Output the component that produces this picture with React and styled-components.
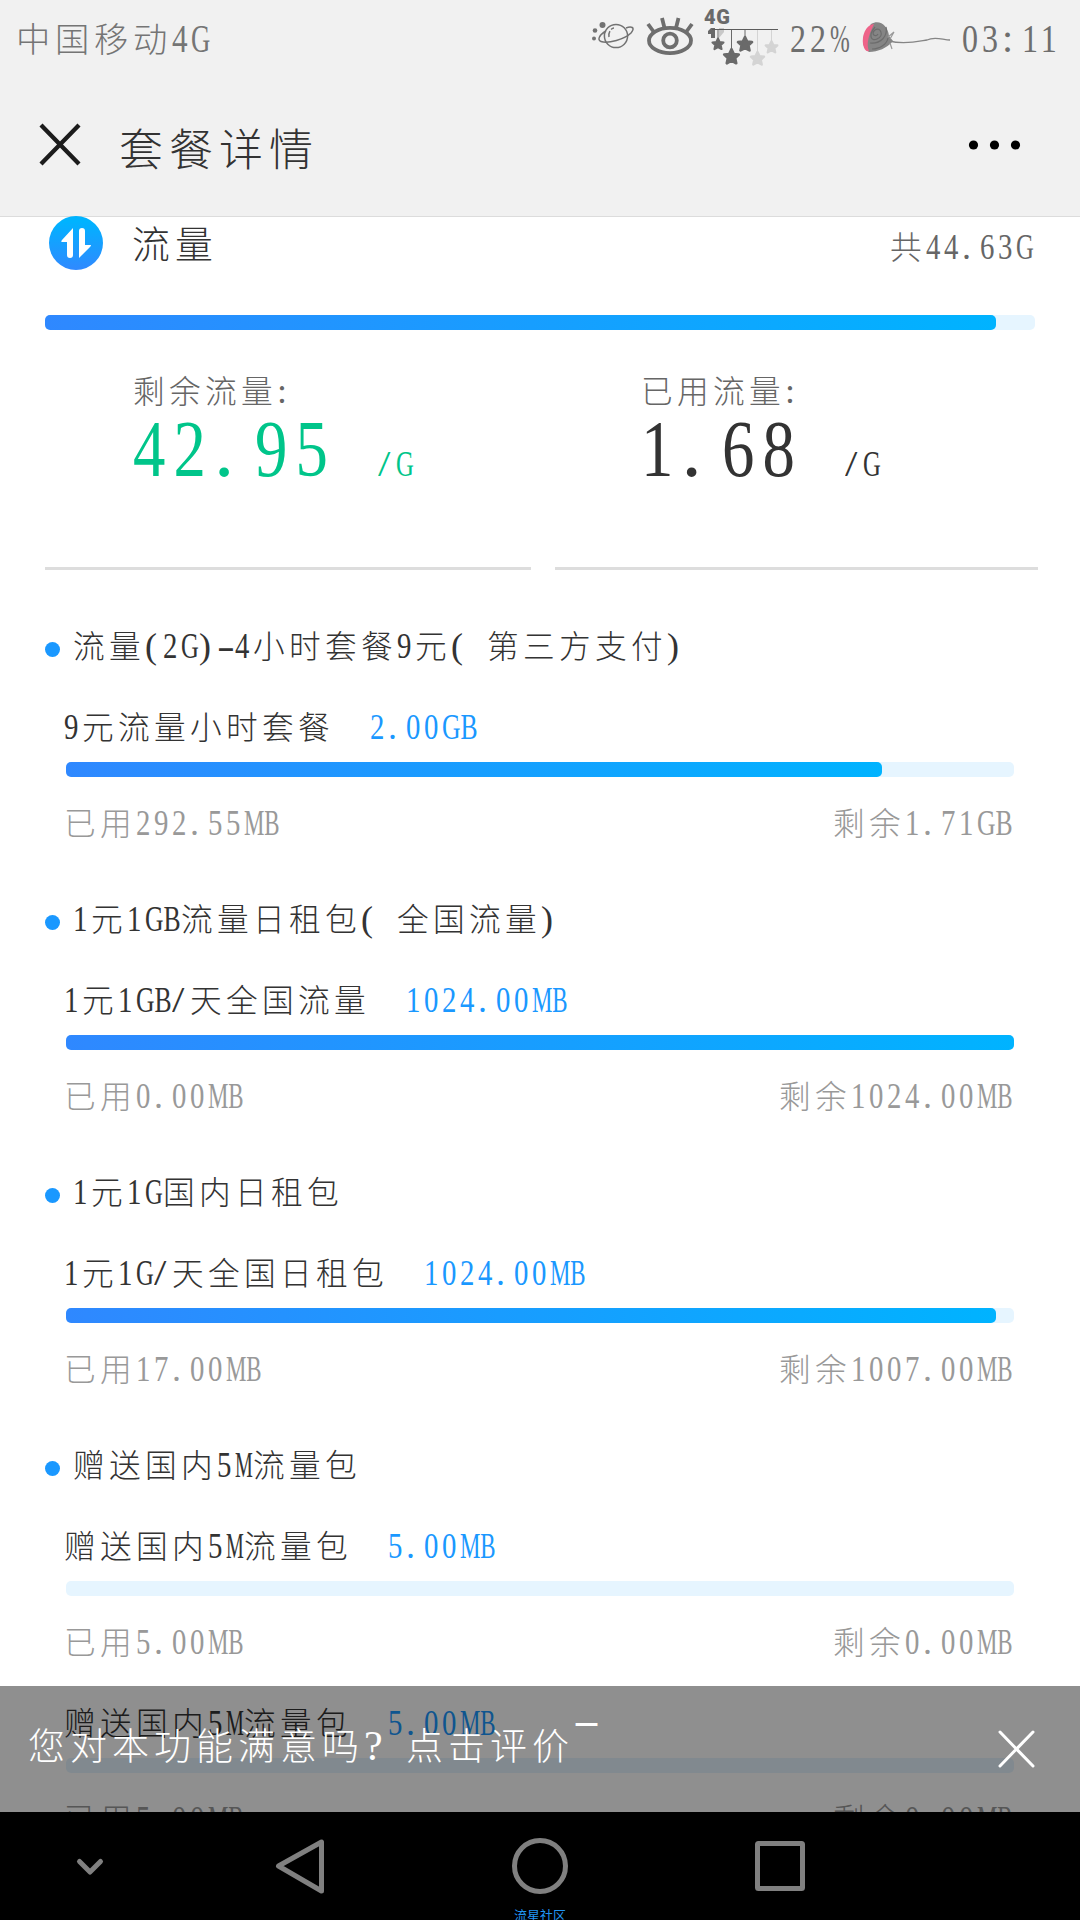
import React from 'react';
import styled, { createGlobalStyle } from 'styled-components';

const GlobalStyle = createGlobalStyle`
    * {
        box-sizing: border-box;
    }

    body {
        margin: 0;
        background: #fff;
        font-family: "Liberation Serif", "Noto Sans CJK SC", serif;
    }
`;

const Screen = styled.div`
    display: flex;
    flex-direction: column;
    width: 1080px;
    height: 1920px;
    overflow: hidden;
    color: #333;
`;

/* ---------- text ---------- */

const Line = styled.div`
    font-size: ${({ $size = 36 }) => $size}px;
    line-height: ${({ $height = 40 }) => $height}px;
    color: ${({ $color = '#333' }) => $color};
    white-space: pre;
`;

const Han = styled.span`
    font-size: 0.88em;
    line-height: 0;
    letter-spacing: 0.1364em;
    font-weight: 300;
`;

// every latin character takes half of a han cell
const HalfCell = styled.span`
    display: inline-block;
    width: ${({ $count }) => $count * 0.5}em;
`;

const Squeezed = styled.span`
    display: inline-block;
    transform: scaleX(${({ $scale }) => $scale});
    transform-origin: left center;
`;

// slim digits, spaced so that each one still fills its half cell
const Digits = styled(Squeezed)`
    letter-spacing: 0.125em;
`;

const WIDTHS = { G: 0.722, B: 0.667, M: 0.889, '%': 0.833, '-': 0.333, '/': 0.4 };

const Mixed = ({ text }) => {
    const runs = text.match(/[\u4e00-\u9fff]+|[0-9]+|[GBM]+|./g);

    return runs.map((run, i) => {
        if (/[\u4e00-\u9fff]/.test(run)) {
            return <Han key={i}>{run}</Han>;
        }
        if (/[0-9]/.test(run)) {
            return (
                <HalfCell key={i} $count={run.length}>
                    <Digits $scale={0.8}>{run}</Digits>
                </HalfCell>
            );
        }
        const natural = [...run].reduce((sum, c) => sum + (WIDTHS[c] || 0), 0);
        return (
            <HalfCell key={i} $count={run.length}>
                {natural ? (
                    <Squeezed $scale={(run.length * 0.495) / natural}>{run}</Squeezed>
                ) : run}
            </HalfCell>
        );
    });
};

/* ---------- header ---------- */

const Header = styled.header`
    flex: none;
    height: 216px;
    background: #f1f1f1;
    box-shadow: 0 1px 0 #dcdcdc;
`;

const StatusBar = styled.div`
    display: flex;
    align-items: center;
    height: 78px;
    padding: 0 18px 0 16px;
`;

const StatusIcons = styled.div`
    display: flex;
    align-items: center;
    margin-left: auto;
`;

const StatusText = styled(Line)`
    width: ${({ $width }) => $width}px;
`;

const TitleBar = styled.div`
    display: flex;
    align-items: center;
    height: 134px;
    padding: 0 58px 0 38px;
`;

const PageTitle = styled(Line)`
    flex: 1;
    margin: 7px 0 0 35px;
`;

const PlanetIcon = () => (
    <svg width="50" height="78" viewBox="590 0 50 78" fill="none" stroke="#727272" strokeWidth="1.5">
        <circle cx="616" cy="36" r="11.6" />
        <path d="M606 31C599 35 597 40 601 41.5C608 44 625 39 631 33C636 27 631 26 626 28" />
        <path d="M609 37C608 33 611 28 614 28" strokeDasharray="6 2" />
        <g fill="#727272" stroke="none">
            <circle cx="602.5" cy="25" r="3" />
            <circle cx="595" cy="30.5" r="2.3" />
            <circle cx="594" cy="38.5" r="2" />
        </g>
    </svg>
);

const EyeIcon = () => (
    <svg width="60" height="78" viewBox="640 0 60 78" fill="none" stroke="#6e6e6e" strokeWidth="3.8">
        <ellipse cx="670" cy="40.5" rx="21" ry="12.7" />
        <circle cx="670" cy="40.5" r="6.8" />
        <path d="M648 24L653.5 31.5M662 18L664.5 28M678.5 18L676 28M692 24L686.5 31.5" />
    </svg>
);

const STAR = 'M0-6.5L2-2.2L6.5-1.8L3.2 1.3L4.2 6L0 3.7L-4.2 6L-3.2 1.3L-6.5-1.8L-2-2.2Z';

const HANGING_STARS = [
    { x: 718, y: 44, scale: 0.85, color: '#6a6a6a' },
    { x: 731.5, y: 56.5, scale: 1.12, color: '#6a6a6a' },
    { x: 745, y: 44, scale: 1.08, color: '#6a6a6a' },
    { x: 757.5, y: 58.5, scale: 1, color: '#d4d4d4' },
    { x: 771.5, y: 47, scale: 0.9, color: '#d4d4d4' },
];

const SignalLabel = styled.text`
    font: 900 20px Roboto, sans-serif;
    fill: #6a6a6a;
`;

const SignalIcon = () => (
    <svg width="90" height="78" viewBox="700 0 90 78">
        <SignalLabel x="704" y="23.5" textLength="26">4G</SignalLabel>
        <path d="M715 28V38H711V34H708V31L711 28Z" fill="#6a6a6a" />
        <path d="M719 28H724V32L719 38Z" fill="#c8c8c8" />
        {HANGING_STARS.map(({ x, y, scale, color }) => (
            <g key={x} stroke={color} fill={color}>
                <path d={`M${x} 29V${y - 4}`} />
                <path d={STAR} transform={`translate(${x} ${y}) scale(${scale})`} strokeWidth="2.4" strokeLinejoin="round" />
            </g>
        ))}
        <path d="M712 29.5H778" stroke="#5c5c5c" strokeWidth="1.2" />
    </svg>
);

const RoseIcon = () => (
    <svg width="112" height="78" viewBox="850 0 112 78" fill="none">
        <path d="M889 41C905 45 920 41 927 40C935 36 943 40 950 40" stroke="#858585" strokeWidth="1.3" />
        <path d="M871 24C880 19 888 26 889 36L893 41C887 48 878 52 869 52C863 48 862 42 864 35Z" fill="#858585" />
        <path d="M874 24C865 25 862 36 863 44C864 49 866 52 869 51C866 44 869 37 870 33Z" fill="#ee6389" />
        <path d="M875 27C868 35 871 42 877 39C885 36 880 26 875 30C870 34 876 38 878 34M886 27C888 36 881 44 870 43M872 49C880 49 887 44 888 38" stroke="#6c6c6c" strokeWidth="1.2" />
        <path d="M888 37L894 32L890 39M890 43L892 49" stroke="#999" strokeWidth="1.2" />
    </svg>
);

const CloseIcon = () => (
    <svg width="46" height="46" viewBox="0 0 46 46" stroke="#1c1c1c" strokeWidth="4.3">
        <path d="M3 3L41 42M41 3L3 42" />
    </svg>
);

const MoreIcon = () => (
    <svg width="54" height="10" viewBox="0 0 54 10">
        <circle cx="5.5" cy="5" r="4.6" />
        <circle cx="26.5" cy="5" r="4.6" />
        <circle cx="47.5" cy="5" r="4.6" />
    </svg>
);

/* ---------- content ---------- */

const Content = styled.main`
    position: relative;
    flex: none;
    height: 1596px;
    overflow: hidden;
`;

const Summary = styled.section`
    padding: 0 45px;
`;

const SummaryHead = styled.div`
    display: flex;
    align-items: center;
    height: 54px;
    padding-left: 4px;
`;

const SummaryTitle = styled(Line)`
    flex: 1;
    margin: 2px 0 0 29px;
`;

const SummaryTotal = styled(Line)`
    margin: 8px 1px 0 0;
`;

const Track = styled.div`
    height: 15px;
    border-radius: 5px;
    background: #e6f5ff;
`;

const Fill = styled.div`
    height: 100%;
    border-radius: 5px;
    background: linear-gradient(to right, #2f88ff, #00b3ff);
`;

const Bar = ({ percent }) => (
    <Track>
        <Fill style={{ width: `${percent}%` }} />
    </Track>
);

const SummaryBar = styled.div`
    margin: 45px 0 41px;
`;

const Totals = styled.div`
    display: grid;
    grid-template-columns: 486px 483px;
    column-gap: 24px;
    width: 993px;
`;

const Total = styled.div`
    height: 199px;
    padding-left: ${({ $indent }) => $indent}px;
    border-bottom: 3px solid #ddd;
`;

const Amount = styled.div`
    display: flex;
    align-items: baseline;
    gap: 42px;
    margin-top: -2px;
`;

const PackageList = styled.section`
    display: flex;
    flex-direction: column;
    gap: 56px;
    padding-top: 56px;
`;

const PackageItem = styled.article`
    padding: 0 66px 0 64px;
    margin-top: ${({ $untitled }) => ($untitled ? -15 : 0)}px;
`;

const PackageTitle = styled.div`
    display: flex;
    align-items: center;
    gap: 13px;
    margin: 0 0 41px -19px;
`;

const Dot = styled.i`
    width: 15px;
    height: 15px;
    margin-top: 7px;
    border-radius: 50%;
    background: #1a98ff;
`;

const PackageName = styled.div`
    display: flex;
    gap: 36px;
`;

const PackageBar = styled.div`
    margin: 15px 0 26px 2px;
`;

const Usage = styled.div`
    display: flex;
    justify-content: space-between;
    margin-right: 1px;
`;

const TransferIcon = () => (
    <svg width="54" height="54" viewBox="0 0 54 54">
        <defs>
            <linearGradient id="transfer" x1="0" y1="0" x2="0" y2="1">
                <stop offset="0.1" stopColor="#00b3ff" />
                <stop offset="1" stopColor="#3089ff" />
            </linearGradient>
        </defs>
        <circle cx="27" cy="27" r="27" fill="url(#transfer)" />
        <path
            d="M24 12V39Q24 42 21 42Q18 42 18 39V26H12.5Q12 25 13 24ZM30 15Q30 12 33 12Q36 12 36 15V29H42Q42 30 41 31L30 42Z"
            fill="#fff"
        />
    </svg>
);

const Package = ({ title, name, size, used, left, percent }) => (
    <PackageItem $untitled={!title}>
        {title && (
            <PackageTitle>
                <Dot />
                <Line><Mixed text={title} /></Line>
            </PackageTitle>
        )}
        <PackageName>
            <Line><Mixed text={name} /></Line>
            <Line $color="#1a98ff"><Mixed text={size} /></Line>
        </PackageName>
        <PackageBar>
            <Bar percent={percent} />
        </PackageBar>
        <Usage>
            <Line $color="#999"><Mixed text={`已用${used}`} /></Line>
            <Line $color="#999"><Mixed text={`剩余${left}`} /></Line>
        </Usage>
    </PackageItem>
);

/* ---------- feedback toast and navigation ---------- */

const Toast = styled.div`
    position: absolute;
    left: 0;
    bottom: 0;
    display: flex;
    align-items: center;
    justify-content: space-between;
    width: 100%;
    height: 126px;
    padding: 0 44px 0 28px;
    background: rgba(0, 0, 0, 0.44);
`;

const ToastText = styled(Line)`
    display: flex;
    align-items: baseline;
    margin-top: -7px;
`;

const Wide = styled.span`
    display: inline-block;
    width: 1em;
`;

const TailMark = styled.span`
    display: inline-block;
    margin-left: 2px;
    font-weight: bold;
    transform: translateY(-0.13em);
`;

const NavBar = styled.nav`
    position: relative;
    flex: none;
    height: 108px;
    background: #000;
`;

const NavIcons = styled.svg`
    display: block;
    fill: none;
    stroke: #808080;
    stroke-width: 5;
    stroke-linejoin: round;
    stroke-linecap: round;
`;

const Watermark = styled.span`
    position: absolute;
    left: 514px;
    bottom: -2px;
    font: 13px/14px "Noto Sans CJK SC", sans-serif;
    color: #2196f3;
`;

const PACKAGES = [
    {
        title: '流量(2G)-4小时套餐9元( 第三方支付)',
        name: '9元流量小时套餐',
        size: '2.00GB',
        used: '292.55MB',
        left: '1.71GB',
        percent: 86.1,
    },
    {
        title: '1元1GB流量日租包( 全国流量)',
        name: '1元1GB/天全国流量',
        size: '1024.00MB',
        used: '0.00MB',
        left: '1024.00MB',
        percent: 100,
    },
    {
        title: '1元1G国内日租包',
        name: '1元1G/天全国日租包',
        size: '1024.00MB',
        used: '17.00MB',
        left: '1007.00MB',
        percent: 98.1,
    },
    {
        title: '赠送国内5M流量包',
        name: '赠送国内5M流量包',
        size: '5.00MB',
        used: '5.00MB',
        left: '0.00MB',
        percent: 0,
    },
    {
        name: '赠送国内5M流量包',
        size: '5.00MB',
        used: '5.00MB',
        left: '0.00MB',
        percent: 0,
    },
];

export default function App() {
    return (
        <Screen>
            <GlobalStyle />
            <Header>
                <StatusBar>
                    <Line $size={39} $color="#757575"><Mixed text="中国移动4G" /></Line>
                    <StatusIcons>
                        <PlanetIcon />
                        <EyeIcon />
                        <SignalIcon />
                        <StatusText $size={40} $width={60} $color="#6e6e6e"><Mixed text="22%" /></StatusText>
                        <RoseIcon />
                        <StatusText $size={40} $width={100} $color="#6e6e6e"><Mixed text="03:11" /></StatusText>
                    </StatusIcons>
                </StatusBar>
                <TitleBar>
                    <CloseIcon />
                    <PageTitle $size={50} $height={60}><Mixed text="套餐详情" /></PageTitle>
                    <MoreIcon />
                </TitleBar>
            </Header>

            <Content>
                <Summary>
                    <SummaryHead>
                        <TransferIcon />
                        <SummaryTitle $size={43} $height={54}><Mixed text="流量" /></SummaryTitle>
                        <SummaryTotal $color="#666" $height={50}><Mixed text="共44.63G" /></SummaryTotal>
                    </SummaryHead>
                    <SummaryBar>
                        <Bar percent={96.1} />
                    </SummaryBar>
                    <Totals>
                        <Total $indent={88}>
                            <Line $color="#666"><Mixed text="剩余流量:" /></Line>
                            <Amount>
                                <Line $size={81} $height={80} $color="#00c58a"><Mixed text="42.95" /></Line>
                                <Line $color="#00c58a"><Mixed text="/G" /></Line>
                            </Amount>
                        </Total>
                        <Total $indent={86}>
                            <Line $color="#666"><Mixed text="已用流量:" /></Line>
                            <Amount>
                                <Line $size={81} $height={80}><Mixed text="1.68" /></Line>
                                <Line><Mixed text="/G" /></Line>
                            </Amount>
                        </Total>
                    </Totals>
                </Summary>

                <PackageList>
                    {PACKAGES.map((item, i) => <Package key={i} {...item} />)}
                </PackageList>

                <Toast>
                    <ToastText $size={42} $height={50} $color="#fff">
                        <Mixed text="您对本功能满意吗" />
                        <Wide>?</Wide>
                        <Mixed text="点击评价" />
                        <TailMark>¯</TailMark>
                    </ToastText>
                    <svg width="38" height="38" viewBox="0 0 38 38" stroke="#fff" strokeWidth="3" strokeLinecap="round">
                        <path d="M2 2L35 36M35 2L2 36" />
                    </svg>
                </Toast>
            </Content>

            <NavBar>
                <NavIcons width="1080" height="108" viewBox="0 0 1080 108">
                    <path d="M79.5 49.5L90 60L100.5 49.5" />
                    <path d="M321.5 30V79L278.5 54Z" />
                    <circle cx="540" cy="54" r="25.5" />
                    <rect x="757.5" y="31.5" width="45" height="45" rx="1" />
                </NavIcons>
                <Watermark>流星社区</Watermark>
            </NavBar>
        </Screen>
    );
}
